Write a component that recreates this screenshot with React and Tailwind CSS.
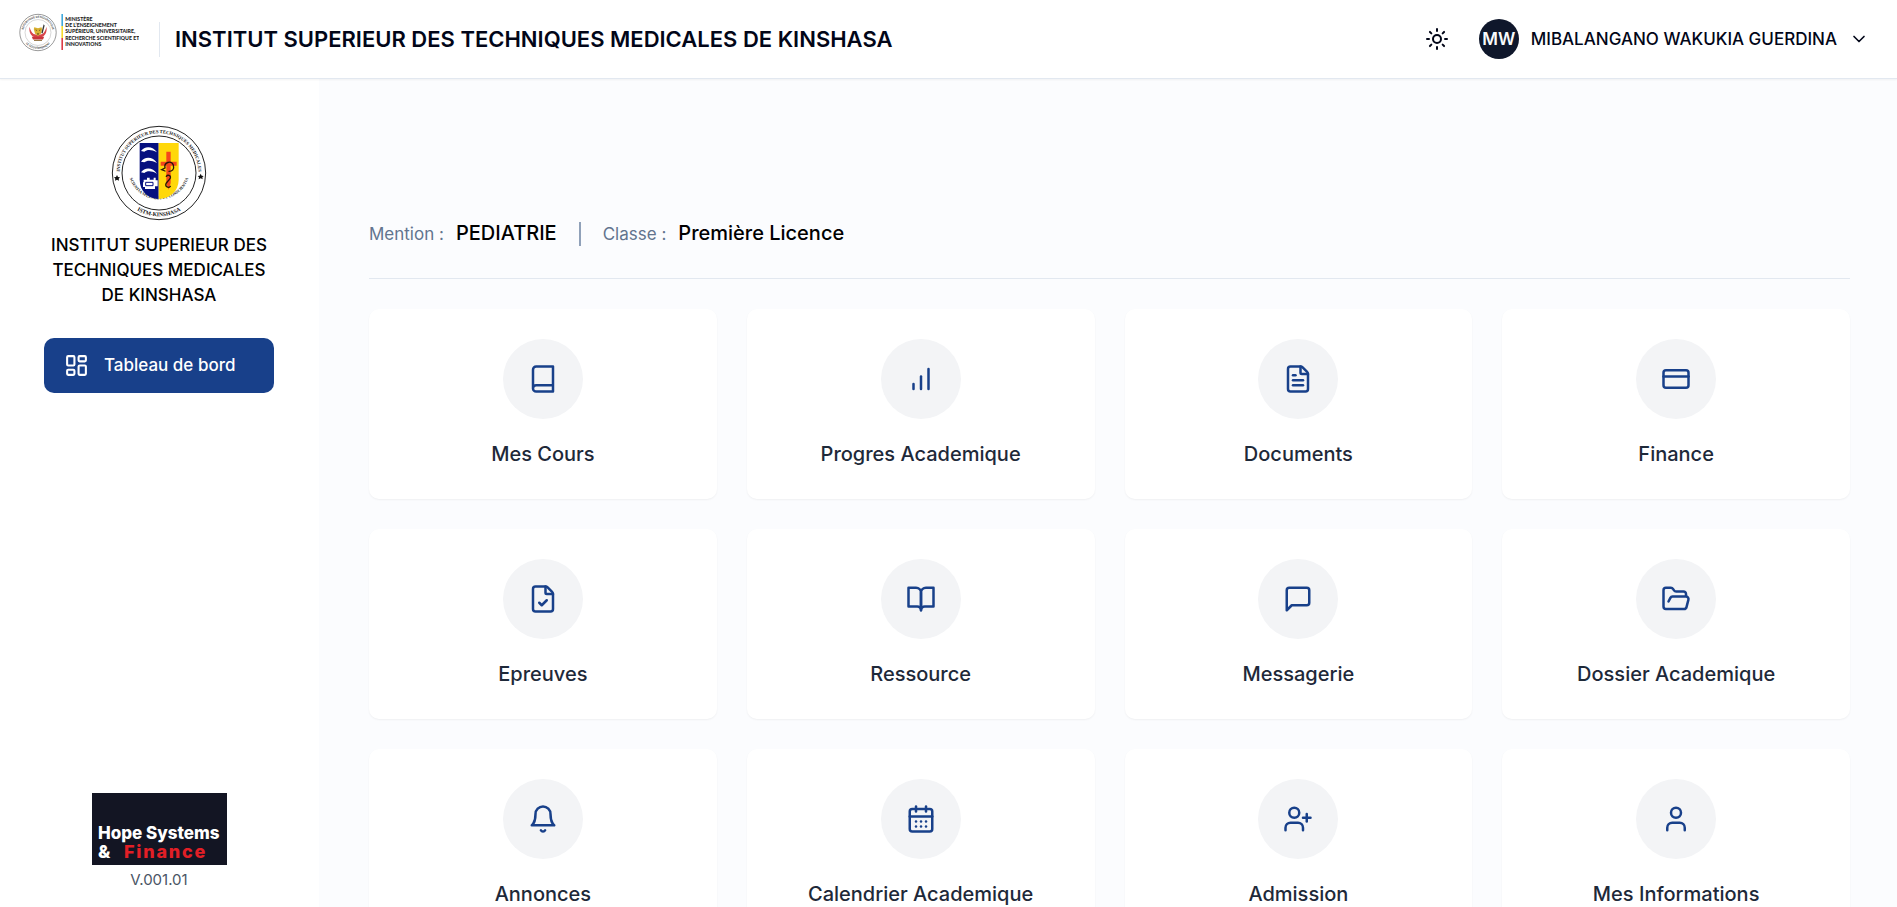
import React from 'react';
import {
  Sun,
  ChevronDown,
  LayoutDashboard,
  FileText,
  FileCheck,
  FolderOpen,
  CalendarDays,
  UserPlus,
  User,
} from 'lucide-react';

const Icon = ({ children }) => (
  <svg
    width="30"
    height="30"
    viewBox="0 0 24 24"
    fill="none"
    stroke="currentColor"
    strokeWidth="2"
    strokeLinecap="round"
    strokeLinejoin="round"
    aria-hidden="true"
  >
    {children}
  </svg>
);

const BookIcon = () => (
  <Icon>
    <path d="M4 19.5v-15A2.5 2.5 0 0 1 6.5 2H20v20H6.5a2.5 2.5 0 0 1 0-5H20" />
  </Icon>
);

const BarsIcon = () => (
  <Icon>
    <path d="M18 20V4" />
    <path d="M12 20V10" />
    <path d="M6 20v-4" />
  </Icon>
);

const CardIcon = () => (
  <Icon>
    <rect width="20" height="14" x="2" y="5" rx="2" />
    <path d="M2 10h20" />
  </Icon>
);

const BookOpenIcon = () => (
  <Icon>
    <path d="M2 3h6a4 4 0 0 1 4 4v14a3 3 0 0 0-3-3H2z" />
    <path d="M22 3h-6a4 4 0 0 0-4 4v14a3 3 0 0 1 3-3h7z" />
  </Icon>
);

const MessageIcon = () => (
  <Icon>
    <path d="M21 15a2 2 0 0 1-2 2H7l-4 4V5a2 2 0 0 1 2-2h14a2 2 0 0 1 2 2z" />
  </Icon>
);

const BellIcon = () => (
  <Icon>
    <path d="M6 8a6 6 0 0 1 12 0c0 7 3 9 3 9H3s3-2 3-9" />
    <path d="M10.3 21a1.94 1.94 0 0 0 3.4 0" />
  </Icon>
);

const modules = [
  { label: 'Mes Cours', icon: <BookIcon /> },
  { label: 'Progres Academique', icon: <BarsIcon /> },
  { label: 'Documents', icon: <FileText size={30} /> },
  { label: 'Finance', icon: <CardIcon /> },
  { label: 'Epreuves', icon: <FileCheck size={30} /> },
  { label: 'Ressource', icon: <BookOpenIcon /> },
  { label: 'Messagerie', icon: <MessageIcon /> },
  { label: 'Dossier Academique', icon: <FolderOpen size={30} /> },
  { label: 'Annonces', icon: <BellIcon /> },
  { label: 'Calendrier Academique', icon: <CalendarDays size={30} /> },
  { label: 'Admission', icon: <UserPlus size={30} /> },
  { label: 'Mes Informations', icon: <User size={30} /> },
];

const MinistryLogo = () => (
  <svg width="120" height="40" viewBox="0 0 1200 400" role="img" aria-label="Ministère" className="shrink-0">
    <defs>
      <path id="govTop" d="M43 195a147 147 0 0 1 294 0" />
      <path id="govBottom" d="M26 195a164 164 0 0 0 328 0" />
    </defs>
    <circle cx="190" cy="195" r="182" fill="#fff" stroke="#555" strokeWidth="6" />
    <circle cx="190" cy="195" r="130" fill="none" stroke="#999" strokeWidth="4" />
    <g fill="#444" fontFamily="Lato, sans-serif" fontSize="28" fontWeight="700" textAnchor="middle">
      <text><textPath href="#govTop" startOffset="50%">REPUBLIQUE DEMOCRATIQUE</textPath></text>
      <text><textPath href="#govBottom" startOffset="50%">LE GOUVERNEMENT</textPath></text>
    </g>
    <path d="M106 138c-12 60 20 112 84 112s96-52 84-112c-6 34-20 58-40 72l-44 10-44-10c-20-14-34-38-40-72z" fill="#d9454a" />
    <path d="M128 238h124l-12 28H140z" fill="#c9343c" />
    <path d="M150 268h80v12h-80z" fill="#9b7a4a" />
    <path d="M152 142l-4 20 12 44 30 24 30-24 12-44-8-20-34 10z" fill="#d8b030" />
    <path d="M164 164l14 6-4 10zM216 164l-14 6 4 10zM178 204h24l-12 16z" fill="#40301c" />
    <path d="M224 200l22-88 10 14-20 80z" fill="#333" />
    <rect x="424" y="10" width="16" height="120" fill="#3fa9dc" />
    <rect x="424" y="130" width="16" height="120" fill="#f6dc2e" />
    <rect x="424" y="250" width="16" height="120" fill="#dd3b46" />
    <g fill="#1c1c1c" fontFamily="Lato, sans-serif" fontSize="52" fontWeight="900">
      <text x="462" y="80">MINISTÈRE</text>
      <text x="462" y="142">DE L’ENSEIGNEMENT</text>
      <text x="462" y="204">SUPÉRIEUR, UNIVERSITAIRE,</text>
      <text x="462" y="266">RECHERCHE SCIENTIFIQUE ET</text>
      <text x="462" y="328">INNOVATIONS</text>
    </g>
  </svg>
);

const SchoolLogo = () => (
  <svg width="96" height="96" viewBox="0 0 288 288" role="img" aria-label="ISTM Kinshasa">
    <defs>
      <path id="ringTop" d="M28 164a118 118 0 1 1 232 0" />
      <path id="ringBottom" d="M14 144a130 130 0 0 0 260 0" />
      <path id="ringInner" d="M51 130a93 93 0 0 0 186 0" />
    </defs>
    <circle cx="144" cy="144" r="140" fill="#fff" stroke="#222" strokeWidth="3" />
    <circle cx="144" cy="144" r="111" fill="none" stroke="#222" strokeWidth="3" />
    <g fill="#111" fontFamily="Liberation Serif, serif" fontWeight="700" textAnchor="middle">
      <text fontSize="14"><textPath href="#ringTop" startOffset="50%">INSTITUT SUPERIEUR DES TECHNIQUES MEDICALES</textPath></text>
      <text fontSize="17"><textPath href="#ringBottom" startOffset="50%">ISTM-KINSHASA</textPath></text>
      <text fontSize="12"><textPath href="#ringInner" startOffset="50%">SCIENTIA SPLENDET ET CONSCIENTIA</textPath></text>
    </g>
    <path d="M18 150l3 6 6 1-4 4 1 6-6-3-6 3 1-6-4-4 6-1zM269 146l3 6 6 1-4 4 1 6-6-3-6 3 1-6-4-4 6-1z" fill="#111" />
    <path d="M86 54h57v168c-32-2-57-24-57-58z" fill="#06107f" />
    <path d="M143 54h60v110c0 34-26 56-60 58z" fill="#ffd80a" />
    <g fill="#fff">
      <path d="M90 78c10-16 36-16 48 4-16-9-30-9-38-2z" />
      <path d="M90 110c10-16 36-16 48 4-16-9-30-9-38-2z" />
      <path d="M90 142c10-16 36-16 48 4-16-9-30-9-38-2z" />
      <path d="M98 164h10v-6h8v6h12v-6h6v8h6v18h-8v8h-30v-6h-6v-14h2z" />
    </g>
    <path d="M104 172h22v10h-22z" fill="none" stroke="#06107f" strokeWidth="3" />
    <path d="M166 80h13v30h18v12h-18v52l-6 20-7-20v-52h-17v-12h17z" fill="#f4471c" />
    <path
      d="M162 138l-10-4 10-5c-4-17 18-24 25-9 4 14-4 19-13 19M166 154c4-6 14-3 12 5-4 10-18 14-13 24 4 5 10 5 13 1"
      fill="none"
      stroke="#2a1609"
      strokeWidth="4"
      strokeLinecap="round"
    />
  </svg>
);

const HopeLogo = () => (
  <svg width="135" height="72" viewBox="0 0 135 72" role="img" aria-label="Hope Systems & Finance">
    <rect width="135" height="72" fill="#131523" />
    <g fontFamily="Inter, sans-serif" fontWeight="800">
      <text x="6" y="46" fill="#fff" fontSize="17">Hope Systems</text>
      <text x="6" y="65" fill="#fff" fontSize="18">&amp;</text>
      <text x="32" y="65" fill="#e21f26" fontSize="18" className="tracking-widest">Finance</text>
    </g>
  </svg>
);

const Header = () => (
  <header className="relative z-10 flex items-center justify-between border-b border-slate-200 bg-white py-[19px] pr-7 pl-[19px] shadow-xs">
    <div className="flex items-center">
      <div className="-mt-3">
        <MinistryLogo />
      </div>
      <div className="ml-5 h-[35px] w-px bg-slate-200" />
      <h1 className="ml-[15px] text-[22px] leading-8 font-semibold text-slate-950">
        INSTITUT SUPERIEUR DES TECHNIQUES MEDICALES DE KINSHASA
      </h1>
    </div>
    <div className="flex items-center gap-[30px]">
      <button type="button" aria-label="Changer de thème" className="text-slate-950">
        <Sun size={24} />
      </button>
      <button type="button" className="flex items-center gap-3 text-[17px] leading-7 font-medium text-slate-950">
        <span className="flex h-10 w-10 items-center justify-center rounded-full bg-slate-900 font-semibold text-slate-50">
          MW
        </span>
        MIBALANGANO WAKUKIA GUERDINA
        <ChevronDown size={20} />
      </button>
    </div>
  </header>
);

const Sidebar = () => (
  <aside className="flex w-[319px] shrink-0 flex-col justify-between bg-white pt-[46px] pr-[45px] pb-4 pl-11">
    <div className="flex flex-col items-center">
      <SchoolLogo />
      <p className="mt-3 text-center text-[17px] leading-[25px] font-medium text-black">
        INSTITUT SUPERIEUR DES TECHNIQUES MEDICALES DE KINSHASA
      </p>
      <a
        href="#"
        className="mt-[30px] flex h-[55px] w-full items-center gap-[15px] rounded-[10px] bg-[#18408a] px-5 text-[17px] font-medium text-white"
      >
        <LayoutDashboard size={25} />
        Tableau de bord
      </a>
    </div>
    <div className="flex flex-col items-center">
      <HopeLogo />
      <p className="mt-1 text-[15px] leading-[22px] text-gray-600">V.001.01</p>
    </div>
  </aside>
);

const ModuleCard = ({ label, icon }) => (
  <a href="#" className="flex flex-col items-center rounded-[10px] bg-white p-[30px] shadow-xs">
    <span className="flex h-20 w-20 items-center justify-center rounded-full bg-gray-100 text-[#18408a]">{icon}</span>
    <span className="mt-5 text-xl leading-[30px] font-medium text-gray-800">{label}</span>
  </a>
);

const App = () => {
  return (
    <div className="flex h-screen flex-col bg-[#fbfcfe] font-[Inter,sans-serif]">
      <Header />
      <div className="flex min-h-0 flex-1">
        <Sidebar />
        <main className="min-w-0 flex-1 overflow-y-auto pt-[139px] pr-[47px] pb-[30px] pl-[50px] [scrollbar-width:none]">
          {/* Mention / classe */}
          <div className="flex items-center border-b border-slate-200 pb-[29px]">
            <p className="flex items-baseline gap-3">
              <span className="text-[17px] leading-[30px] text-slate-500">Mention :</span>
              <span className="text-xl leading-[30px] font-medium text-black">PEDIATRIE</span>
            </p>
            <span className="mx-[22px] h-6 w-0.5 bg-slate-400" />
            <p className="flex items-baseline gap-3">
              <span className="text-[17px] leading-[30px] text-slate-500">Classe :</span>
              <span className="text-xl leading-[30px] font-medium text-black">Première Licence</span>
            </p>
          </div>

          {/* Modules */}
          <div className="mt-[30px] grid grid-cols-2 gap-[30px] xl:grid-cols-4">
            {modules.map((item) => (
              <ModuleCard key={item.label} label={item.label} icon={item.icon} />
            ))}
          </div>
        </main>
      </div>
    </div>
  );
};

export default App;
